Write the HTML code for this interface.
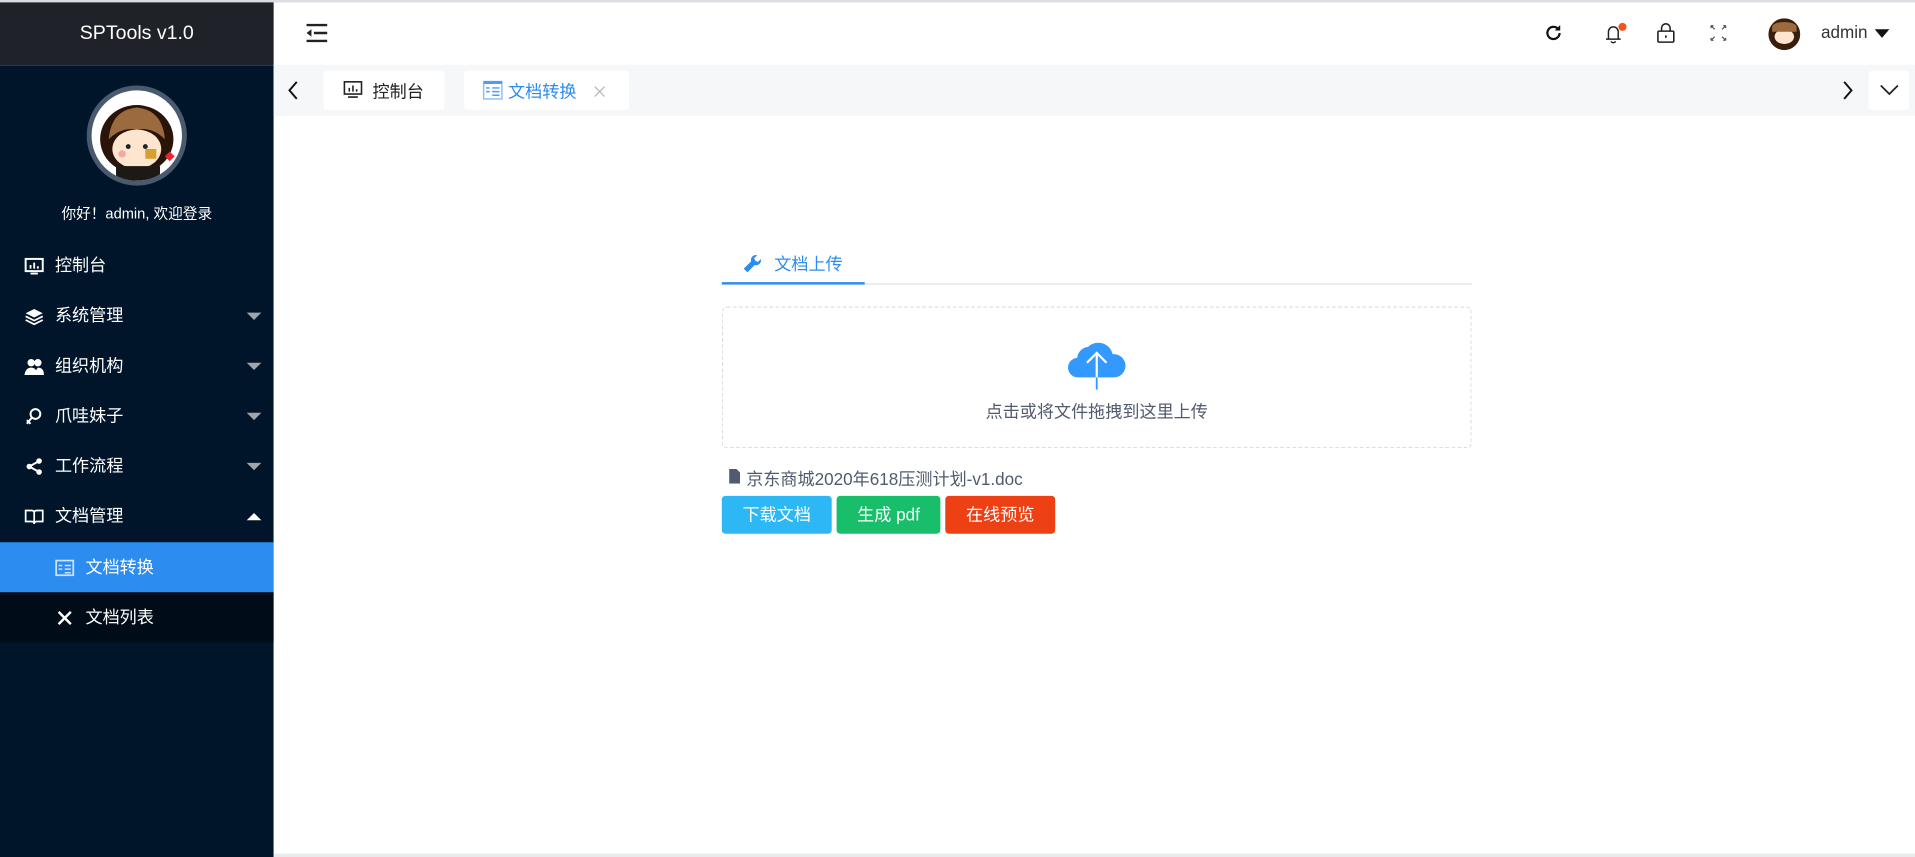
<!DOCTYPE html>
<html><head><meta charset="utf-8"><style>
html,body{margin:0;padding:0;width:1915px;height:857px;overflow:hidden;background:#fff}
#w{position:absolute;left:0;top:0;width:1568px;height:702px;transform:scale(1.22130);transform-origin:0 0;font-family:"Liberation Sans","Noto Sans CJK SC",sans-serif;}
.a{position:absolute}
.side{left:0;top:2px;width:224px;height:700px;background:#00152a}
.mi{position:absolute;left:0;width:224px;height:41px;color:#fff;font-size:14px;line-height:41px}
.mi .t{position:absolute;left:45px}
.mi .ic{position:absolute;left:20px;top:13px;width:16px;height:16px}
.car{position:absolute;right:10px;top:18px;width:0;height:0;border-left:6px solid transparent;border-right:6px solid transparent;border-top:6px solid #a0a4ab}
.btn{position:absolute;top:406px;height:31px;line-height:31px;color:#fff;font-size:14px;text-align:center;border-radius:3px}
</style></head><body><div id="w">
<div class="a" style="left:0;top:0;width:1568px;height:2px;background:#dcdde2"></div>
<div class="a side"></div>
<div class="a" style="left:0;top:2px;width:224px;height:51px;background:#1f2229;color:#fff;font-size:16px;line-height:51px;text-align:center">SPTools v1.0</div>
<div class="a" style="left:0;top:53px;width:224px;height:1px;background:#2b3550"></div>
<div class="a" style="left:71px;top:70px;width:74px;height:74px;border-radius:50%;border:4px solid #4a5a6e;background:#fff;overflow:hidden">
 <svg width="74" height="74" viewBox="0 0 74 74"><ellipse cx="37" cy="40" rx="30" ry="28" fill="#2a1408"/><path d="M14 40 Q16 16 37 14 Q58 16 60 40 Q50 30 37 32 Q24 30 14 40Z" fill="#9b6a3e"/><ellipse cx="37" cy="48" rx="20" ry="16" fill="#fde5cf"/><circle cx="30" cy="46" r="2" fill="#222"/><circle cx="44" cy="46" r="2" fill="#222"/><circle cx="25" cy="52" r="3" fill="#f6a7a0"/><rect x="20" y="62" width="36" height="14" fill="#1d1a16"/><rect x="44" y="48" width="9" height="8" fill="#d6a030"/><path d="M64 50 l4 4 -4 4 -4-4z" fill="#e23"/></svg>
</div>
<div class="a" style="left:0;top:166px;width:224px;text-align:center;color:#fff;font-size:12px">你好！admin, 欢迎登录</div>

<div class="mi" style="top:197px"><svg class="ic" viewBox="0 0 16 16"><rect x="1" y="2" width="14" height="10" fill="none" stroke="#fff" stroke-width="1.6"/><path d="M5 10V7M8 10V5M11 10V8M5 14h6" stroke="#fff" stroke-width="1.5"/></svg><span class="t">控制台</span></div>
<div class="mi" style="top:238px"><svg class="ic" viewBox="0 0 16 16"><path d="M8 2l7 3.5-7 3.5-7-3.5z" fill="#fff"/><path d="M1 8l7 3.5 7-3.5M1 11l7 3.5 7-3.5" fill="none" stroke="#fff" stroke-width="1.4"/></svg><span class="t">系统管理</span><div class="car"></div></div>
<div class="mi" style="top:279px"><svg class="ic" viewBox="0 0 16 16"><circle cx="5.5" cy="5" r="3" fill="#fff"/><circle cx="11" cy="5" r="3" fill="#fff"/><path d="M0 15q1-6 5.5-6t5.5 6zM9 15q0-4 2-6 5 0 5 6z" fill="#fff"/></svg><span class="t">组织机构</span><div class="car"></div></div>
<div class="mi" style="top:320px"><svg class="ic" viewBox="0 0 16 16"><circle cx="9" cy="6" r="4" fill="none" stroke="#fff" stroke-width="1.6"/><path d="M6 9l-4 5M2 11l3 3" stroke="#fff" stroke-width="1.6"/></svg><span class="t">爪哇妹子</span><div class="car"></div></div>
<div class="mi" style="top:361px"><svg class="ic" viewBox="0 0 16 16"><circle cx="12" cy="3.5" r="2.3" fill="#fff"/><circle cx="4" cy="8" r="2.3" fill="#fff"/><circle cx="12" cy="12.5" r="2.3" fill="#fff"/><path d="M12 3.5L4 8l8 4.5" stroke="#fff" stroke-width="1.6" fill="none"/></svg><span class="t">工作流程</span><div class="car"></div></div>
<div class="mi" style="top:402px"><svg class="ic" viewBox="0 0 16 16"><path d="M1 3h5q2 0 2 2v9q0-2-2-2H1zM15 3h-5q-2 0-2 2v9q0-2 2-2h5z" fill="none" stroke="#fff" stroke-width="1.4"/></svg><span class="t">文档管理</span><div class="car" style="border-top:0;border-bottom:6px solid #fff"></div></div>
<div class="mi" style="top:444px;background:#2d8cf0"><svg class="ic" style="left:45px" viewBox="0 0 16 16"><rect x="1" y="2" width="14" height="12" fill="none" stroke="#cfe3fb" stroke-width="1.4"/><path d="M3 6h3M8 6h5M3 9h3M8 9h5M8 12h5" stroke="#cfe3fb" stroke-width="1.2"/></svg><span class="t" style="left:70px">文档转换</span></div>
<div class="mi" style="top:485px;background:#000c17"><svg class="ic" style="left:45px" viewBox="0 0 16 16"><path d="M3 3l10 10M13 3L3 13" stroke="#fff" stroke-width="2"/></svg><span class="t" style="left:70px">文档列表</span></div>

<svg class="a" style="left:250px;top:19px" width="18" height="16" viewBox="0 0 18 16"><path d="M1 1.5h17M7 8h11M1 14.5h17" stroke="#222" stroke-width="2"/><path d="M1 8l4-3v6z" fill="#222"/></svg>
<svg class="a" style="left:1264px;top:19px" width="16" height="16" viewBox="0 0 16 16"><path d="M13 8a5 5 0 1 1-1.5-3.6" fill="none" stroke="#111" stroke-width="1.8"/><path d="M13.5 1.5v4.5h-4.5z" fill="#111"/></svg>
<svg class="a" style="left:1312px;top:17px" width="22" height="20" viewBox="0 0 22 20"><path d="M3 15h12M5 15V9a4 4 0 0 1 8 0v6M7 17q2 2 4 0" fill="none" stroke="#222" stroke-width="1.2"/><circle cx="16.5" cy="5" r="3.3" fill="#f5531c"/></svg>
<svg class="a" style="left:1356px;top:18px" width="16" height="18" viewBox="0 0 16 18"><rect x="1.5" y="7.5" width="13" height="9" rx="1" fill="none" stroke="#222" stroke-width="1.3"/><path d="M4.5 7.5V5a3.5 3.5 0 0 1 7 0v2.5M8 11v2" fill="none" stroke="#222" stroke-width="1.3"/></svg>
<svg class="a" style="left:1400px;top:20px" width="14" height="14" viewBox="0 0 14 14"><path d="M1 1l3 3M13 1l-3 3M1 13l3-3M13 13l-3-3M1 1h2M1 1v2M13 1h-2M13 1v2M1 13h2M1 13v-2M13 13h-2M13 13v-2" stroke="#555" stroke-width="1"/></svg>
<div class="a" style="left:1448px;top:15px;width:26px;height:26px;border-radius:50%;background:#3a1e0c;overflow:hidden"><div style="position:absolute;left:5px;top:9px;width:16px;height:12px;border-radius:50%;background:#fde5cf"></div><div style="position:absolute;left:3px;top:3px;width:20px;height:8px;border-radius:50% 50% 0 0;background:#9b6a3e"></div></div>
<div class="a" style="left:1491px;top:18px;font-size:14px;color:#333">admin</div>
<div class="a" style="left:1535px;top:24px;border-left:6px solid transparent;border-right:6px solid transparent;border-top:7px solid #111"></div>

<div class="a" style="left:224px;top:53px;width:1344px;height:42px;background:#f5f7f9"></div>
<svg class="a" style="left:235px;top:66px" width="10" height="16" viewBox="0 0 10 16"><path d="M8 1L2 8l6 7" fill="none" stroke="#111" stroke-width="1.6"/></svg>
<div class="a" style="left:265px;top:58px;width:99px;height:32px;background:#fff;border-radius:3px"></div>
<svg class="a" style="left:281px;top:66px" width="16" height="15" viewBox="0 0 16 15"><rect x="1" y="1" width="14" height="10" fill="none" stroke="#222" stroke-width="1.3"/><path d="M5 9V6M8 9V4M11 9V7M4 13.5h8" stroke="#222" stroke-width="1.3"/></svg>
<div class="a" style="left:305px;top:65px;font-size:14px;color:#222">控制台</div>
<div class="a" style="left:380px;top:58px;width:135px;height:32px;background:#fff;border-radius:3px"></div>
<svg class="a" style="left:395px;top:65px" width="17" height="17" viewBox="0 0 17 17"><rect x="1" y="2" width="15" height="14" fill="none" stroke="#8bc0f7" stroke-width="1.2"/><path d="M1 2.5h15" stroke="#4a9ef3" stroke-width="2.5"/><path d="M3 7h3M8 7h6M3 10h3M8 10h6M8 13h6" stroke="#4a9ef3" stroke-width="1.2"/></svg>
<div class="a" style="left:416px;top:65px;font-size:14px;color:#2d8cf0">文档转换</div>
<svg class="a" style="left:486px;top:70px" width="10" height="10" viewBox="0 0 10 10"><path d="M1 1l8 8M9 1L1 9" stroke="#bbb" stroke-width="1.1"/></svg>
<svg class="a" style="left:1508px;top:66px" width="10" height="16" viewBox="0 0 10 16"><path d="M2 1l6 7-6 7" fill="none" stroke="#111" stroke-width="1.6"/></svg>
<div class="a" style="left:1530px;top:58px;width:33px;height:32px;background:#fff;border-radius:3px"></div>
<svg class="a" style="left:1539px;top:69px" width="16" height="10" viewBox="0 0 16 10"><path d="M1 1l7 7 7-7" fill="none" stroke="#222" stroke-width="1.4"/></svg>

<svg class="a" style="left:607px;top:207px" width="16" height="16" viewBox="0 0 16 16"><path d="M2 13l6-6a4 4 0 0 1 5-5l-2.5 2.5 1 2 2 1L16 5a4 4 0 0 1-5 5l-6 6z" fill="#2d8cf0"/></svg>
<div class="a" style="left:634px;top:206px;font-size:14px;color:#2d8cf0">文档上传</div>
<div class="a" style="left:591px;top:232px;width:614px;height:1px;background:#dcdee2"></div>
<div class="a" style="left:591px;top:231px;width:117px;height:2px;background:#2d8cf0"></div>
<div class="a" style="left:591px;top:251px;width:612px;height:114px;border:1px dashed #dcdee2;border-radius:4px"></div>
<svg class="a" style="left:873px;top:277px" width="50" height="44" viewBox="0 0 50 44"><path d="M10 32a8 8 0 0 1-1-16 10 10 0 0 1 9-9 12 12 0 0 1 20 6 9 9 0 0 1 2 19z" fill="#3399ff"/><path d="M25 42V12M17 20l8-8 8 8" fill="none" stroke="#fff" stroke-width="1.8"/><path d="M25 32v10" stroke="#3399ff" stroke-width="1.5"/></svg>
<div class="a" style="left:591px;top:327px;width:614px;text-align:center;font-size:14px;color:#515a6e">点击或将文件拖拽到这里上传</div>
<svg class="a" style="left:597px;top:384px" width="9" height="12" viewBox="0 0 9 12"><path d="M0 0h6l3 3v9H0z" fill="#515a6e"/></svg>
<div class="a" style="left:611px;top:382px;font-size:14px;color:#515a6e">京东商城2020年618压测计划-v1.doc</div>
<div class="btn" style="left:591px;width:90px;background:#2db7f5">下载文档</div>
<div class="btn" style="left:685px;width:85px;background:#19be6b">生成 pdf</div>
<div class="btn" style="left:774px;width:90px;background:#ed4014">在线预览</div>
<div class="a" style="left:224px;top:699px;width:1344px;height:3px;background:#e8eaec"></div>
</div></body></html>
